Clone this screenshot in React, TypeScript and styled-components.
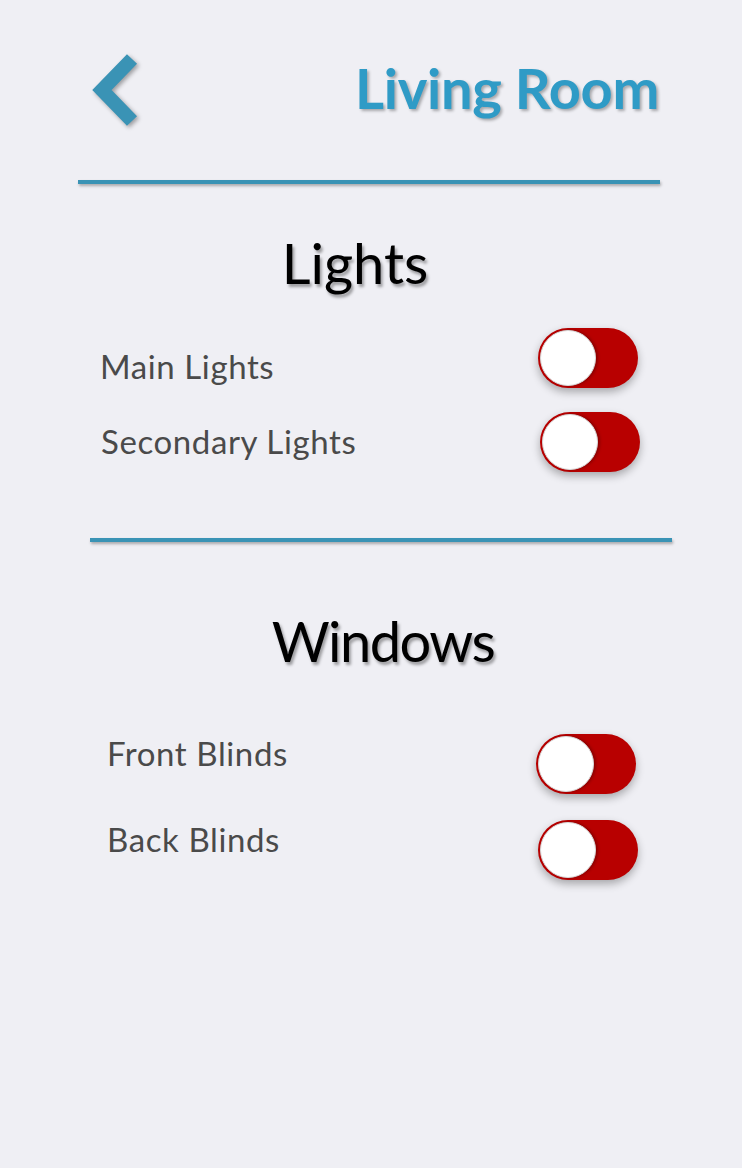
import React from "react";
import styled, { createGlobalStyle } from "styled-components";

const Global = createGlobalStyle`
  html, body { margin: 0; padding: 0; background: #efeff4; }
  body { font-family: Lato, "Open Sans", sans-serif; }
`;

const Page = styled.div`
  width: 742px;
  min-height: 1168px;
  background: #efeff4;
  padding-top: 50px;
  box-sizing: border-box;
`;

const Header = styled.header`
  height: 82px;
  display: flex;
  align-items: center;
  justify-content: space-between;
  padding: 0 83px 0 88px;
`;

const BackButton = styled.button`
  border: 0;
  padding: 0;
  background: none;
  display: flex;
  cursor: pointer;
  filter: drop-shadow(2px 2px 2px rgba(0, 0, 0, 0.35));
`;

const Title = styled.h1`
  margin: 0 0 6px;
  font-family: Lato, sans-serif;
  font-size: 56px;
  font-weight: 700;
  line-height: 64px;
  letter-spacing: -0.3px;
  color: #2f9bc6;
  text-shadow: 2px 2px 3px rgba(0, 0, 0, 0.3);
`;

const Divider = styled.hr<{ $left: number; $top: number }>`
  margin: ${(p) => p.$top}px 0 0 ${(p) => p.$left}px;
  width: 582px;
  height: 4px;
  border: 0;
  background: #3a93b5;
  box-shadow: 1px 2px 3px rgba(0, 0, 0, 0.3);
`;

const Heading = styled.h2<{ $shift: number; $top: number; $spacing: number }>`
  margin: ${(p) => p.$top}px 0 0;
  font-family: Lato, sans-serif;
  font-size: 56px;
  font-weight: 400;
  line-height: 64px;
  letter-spacing: ${(p) => p.$spacing}px;
  color: #000;
  text-align: center;
  padding-left: ${(p) => (p.$shift > 0 ? p.$shift * 2 : 0)}px;
  padding-right: ${(p) => (p.$shift < 0 ? -p.$shift * 2 : 0)}px;
  text-shadow: 2px 3px 3px rgba(0, 0, 0, 0.35);
`;

const Row = styled.div<{ $left: number; $right: number; $top: number }>`
  display: flex;
  align-items: flex-start;
  justify-content: space-between;
  margin-top: ${(p) => p.$top}px;
  padding: 0 ${(p) => p.$right}px 0 ${(p) => p.$left}px;
`;

const Label = styled.span<{ $drop: number }>`
  font-family: Lato, sans-serif;
  font-size: 33px;
  line-height: 32px;
  letter-spacing: 0.6px;
  color: #4a4a4a;
  padding-top: ${(p) => 14 + p.$drop}px;
`;

const Track = styled.button`
  width: 100px;
  height: 60px;
  border: 0;
  padding: 0 2px;
  border-radius: 30px;
  background: #b80000;
  display: flex;
  align-items: center;
  box-shadow: 0 4px 8px rgba(0, 0, 0, 0.3);
  cursor: pointer;
`;

const Knob = styled.span`
  width: 54px;
  height: 54px;
  border-radius: 50%;
  background: #fff;
  border: 1px solid #d8d8d8;
  box-shadow: 2px 0 3px rgba(0, 0, 0, 0.25);
`;

const Toggle = () => (
  <Track aria-label="toggle">
    <Knob />
  </Track>
);

const Chevron = () => (
  <svg width="56" height="82" viewBox="0 0 56 82">
    <polyline
      points="44,9 14,40 44,71"
      fill="none"
      stroke="#3a93b5"
      strokeWidth="14"
      strokeLinecap="butt"
      strokeLinejoin="miter"
    />
  </svg>
);

export default function App() {
  return (
    <Page>
      <Global />
      <Header>
        <BackButton aria-label="Back">
          <Chevron />
        </BackButton>
        <Title>Living Room</Title>
      </Header>
      <Divider $left={78} $top={48} />
      <Heading $shift={-16} $top={47} $spacing={0}>Lights</Heading>
      <Row $left={100} $right={104} $top={33}>
        <Label $drop={8}>Main Lights</Label>
        <Toggle />
      </Row>
      <Row $left={101} $right={102} $top={24}>
        <Label $drop={-1}>Secondary Lights</Label>
        <Toggle />
      </Row>
      <Divider $left={90} $top={66} />
      <Heading $shift={12} $top={67} $spacing={-1.5}>Windows</Heading>
      <Row $left={107} $right={106} $top={61}>
        <Label $drop={-11}>Front Blinds</Label>
        <Toggle />
      </Row>
      <Row $left={107} $right={104} $top={26}>
        <Label $drop={-11}>Back Blinds</Label>
        <Toggle />
      </Row>
    </Page>
  );
}
